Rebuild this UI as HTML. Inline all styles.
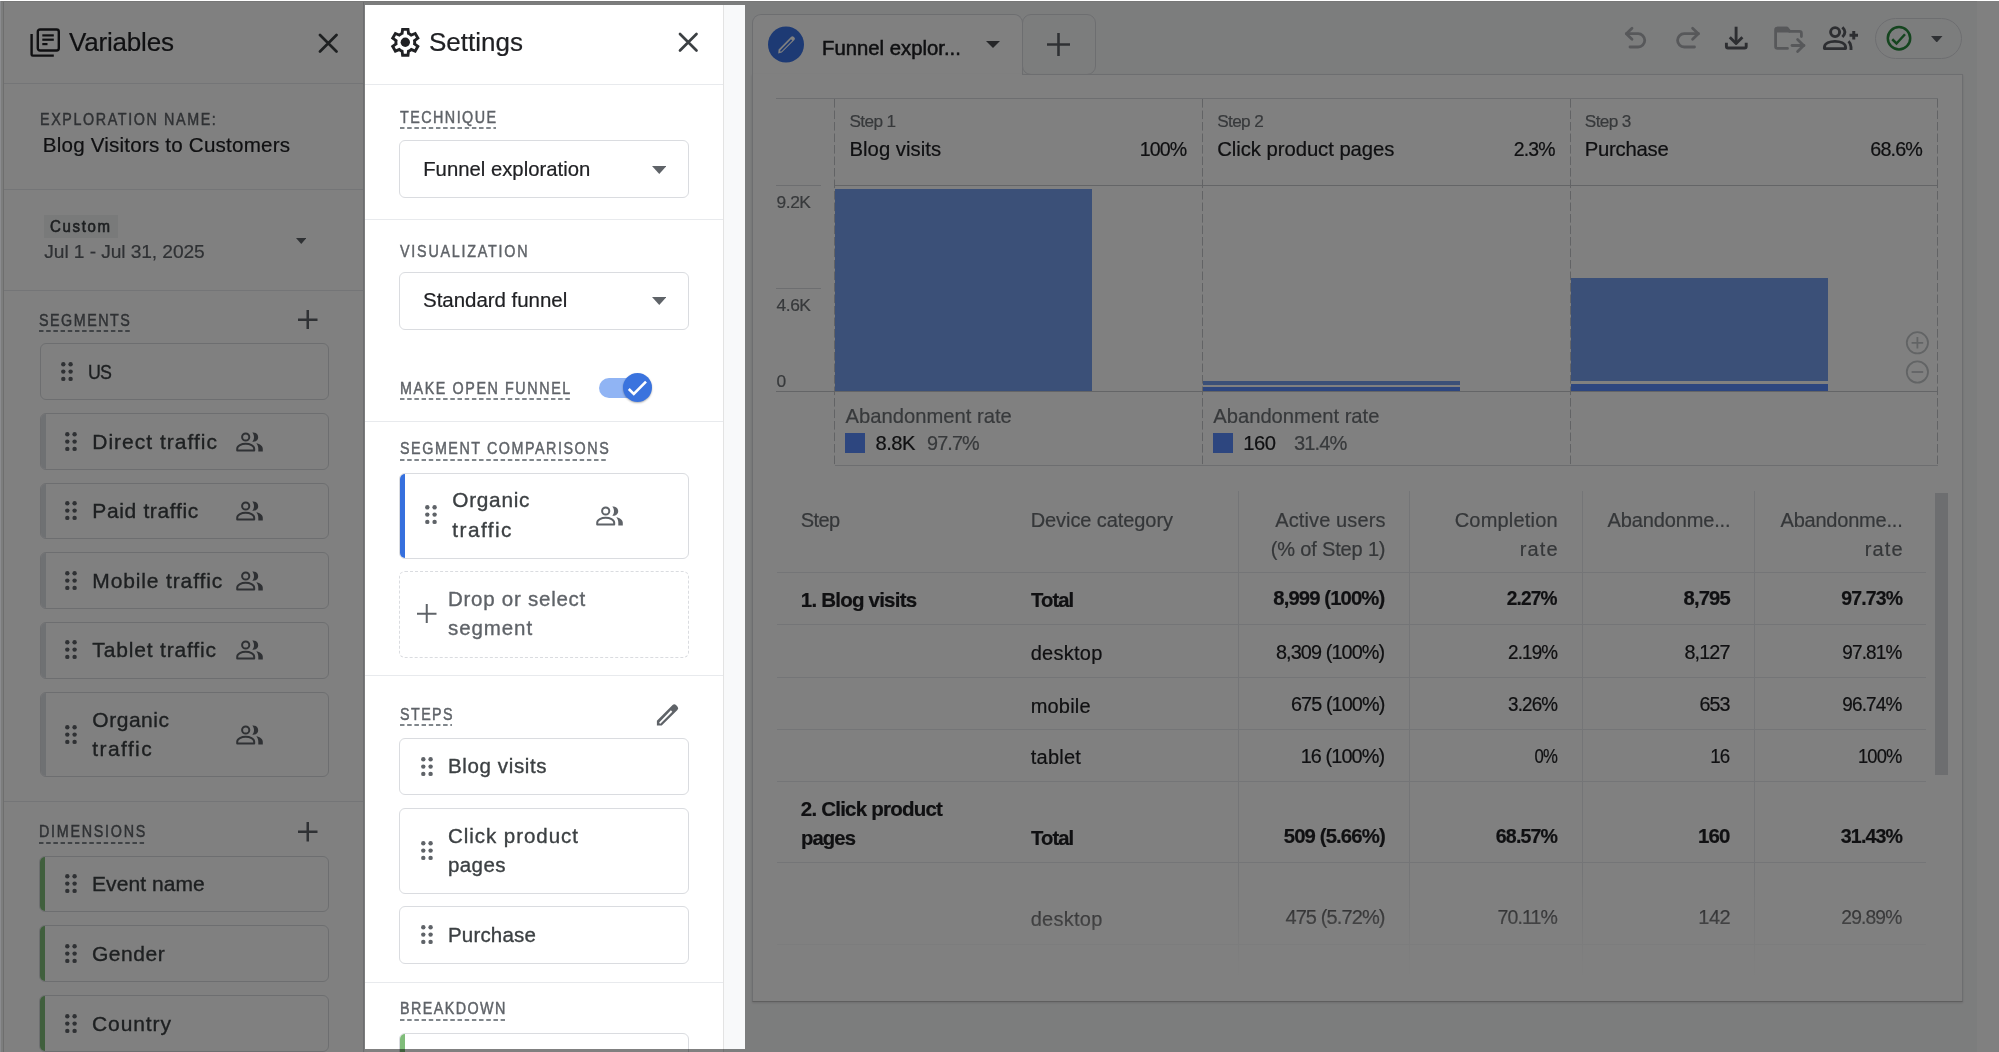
<!DOCTYPE html><html><head><meta charset="utf-8"><style>
html,body{margin:0;padding:0;}
body{width:1999px;height:1052px;overflow:hidden;position:relative;background:#f8f9fa;font-family:"Liberation Sans", sans-serif;}
.t{position:absolute;white-space:nowrap;line-height:1;-webkit-text-stroke:0.2px currentColor;}
.r{position:absolute;}
</style></head><body><div id="root" style="position:absolute;left:0;top:0;width:1999px;height:1052px;overflow:hidden;will-change:transform;background:#f8f9fa;">
<div class="r" style="left:3px;top:1px;width:361px;height:1051px;background:#fff;border-left:1px solid #dcdcdc;border-right:1px solid #dadce0;box-sizing:border-box;"></div>
<div class="r" style="left:0px;top:1px;width:1999px;height:1px;background:#eeeeee;"></div>
<svg class="r" style="left:29px;top:27px;width:32px;height:32px" viewBox="0 0 32 32"><g fill="none" stroke="#202124" stroke-width="2.4"><rect x="8.8" y="2.5" width="21" height="21" rx="2.2"/><path d="M2.6 7 V27.5 Q2.6 28.6 3.7 28.6 H24.8"/></g><g fill="#202124"><rect x="13.3" y="7.3" width="11.5" height="2.2"/><rect x="13.3" y="11.6" width="11.5" height="2.2"/><rect x="13.3" y="16" width="5.2" height="2.2"/></g></svg>
<div class="t" style="top:28.99px;font-size:26px;color:#202124;letter-spacing:-0.184px;left:69.00px;">Variables</div>
<svg class="r" style="left:318px;top:32.5px;width:20.5px;height:20.5px" viewBox="0 0 20.5 20.5"><path d="M2 2 L18.5 18.5 M18.5 2 L2 18.5" stroke="#3c4043" stroke-width="2.7" stroke-linecap="round"/></svg>
<div class="r" style="left:4px;top:83px;width:359px;height:1px;background:#e8eaed;"></div>
<div class="t" style="top:111.30px;font-size:16.3px;color:#5f6368;transform:scaleX(0.8800);transform-origin:left center;letter-spacing:1.822px;left:39.70px;-webkit-text-stroke:0.45px currentColor;">EXPLORATION NAME:</div>
<div class="t" style="top:134.56px;font-size:20.6px;color:#202124;letter-spacing:0.197px;left:42.80px;">Blog Visitors to Customers</div>
<div class="r" style="left:4px;top:189px;width:359px;height:1px;background:#e8eaed;"></div>
<div class="r" style="left:44px;top:215px;width:74px;height:23px;background:#f1f3f4;"></div>
<div class="t" style="top:218.63px;font-size:15.8px;color:#3c4043;transform:scaleX(0.9500);transform-origin:left center;letter-spacing:1.747px;left:50.30px;-webkit-text-stroke:0.6px currentColor;">Custom</div>
<div class="t" style="top:241.55px;font-size:19.2px;color:#5f6368;letter-spacing:-0.088px;left:44.30px;">Jul 1 - Jul 31, 2025</div>
<svg class="r" style="left:295.5px;top:237.5px;width:10.5px;height:6px" viewBox="0 0 10.5 6"><path d="M0 0 H10.5 L5.25 6 Z" fill="#5f6368"/></svg>
<div class="r" style="left:4px;top:290px;width:359px;height:1px;background:#e8eaed;"></div>
<div class="t" style="top:311.50px;font-size:16.3px;color:#5f6368;transform:scaleX(0.8800);transform-origin:left center;letter-spacing:1.708px;left:39.40px;-webkit-text-stroke:0.45px currentColor;">SEGMENTS</div>
<div class="r" style="left:39.4px;top:330px;width:91.0px;height:2px;background-image:linear-gradient(to right,#80868b 0 4.5px,transparent 4.5px 7.2px);background-size:7.2px 2px;"></div>
<svg class="r" style="left:298px;top:309.8px;width:19.5px;height:19.5px" viewBox="0 0 19.5 19.5"><path d="M9.75 0 V19.5 M0 9.75 H19.5" stroke="#5f6368" stroke-width="2.5"/></svg>
<div class="r" style="left:40px;top:343px;width:289px;height:57px;border:1px solid #dadce0;border-radius:6px;box-sizing:border-box;background:#fff;overflow:hidden;"></div>
<svg class="r" style="left:61px;top:361.8px;width:13px;height:20px" viewBox="0 0 13 20"><circle cx="2.30" cy="2.30" r="2.2" fill="#5f6368"/><circle cx="2.30" cy="9.60" r="2.2" fill="#5f6368"/><circle cx="2.30" cy="16.90" r="2.2" fill="#5f6368"/><circle cx="9.60" cy="2.30" r="2.2" fill="#5f6368"/><circle cx="9.60" cy="9.60" r="2.2" fill="#5f6368"/><circle cx="9.60" cy="16.90" r="2.2" fill="#5f6368"/></svg>
<div class="t" style="top:361.02px;font-size:21px;color:#3c4043;transform:scaleX(0.8489);transform-origin:left center;letter-spacing:-0.9px;left:87.80px;-webkit-text-stroke:0.35px currentColor;">US</div>
<div class="r" style="left:40px;top:413px;width:289px;height:57px;border:1px solid #dadce0;border-radius:6px;box-sizing:border-box;background:#fff;overflow:hidden;"><div style="position:absolute;left:-1px;top:-1px;bottom:-1px;width:5.5px;background:#dee1e6"></div></div>
<svg class="r" style="left:65px;top:431.65px;width:13px;height:20px" viewBox="0 0 13 20"><circle cx="2.30" cy="2.30" r="2.2" fill="#5f6368"/><circle cx="2.30" cy="9.60" r="2.2" fill="#5f6368"/><circle cx="2.30" cy="16.90" r="2.2" fill="#5f6368"/><circle cx="9.60" cy="2.30" r="2.2" fill="#5f6368"/><circle cx="9.60" cy="9.60" r="2.2" fill="#5f6368"/><circle cx="9.60" cy="16.90" r="2.2" fill="#5f6368"/></svg>
<div class="t" style="top:430.67px;font-size:21px;color:#3c4043;letter-spacing:0.997px;left:92.30px;-webkit-text-stroke:0.35px currentColor;">Direct traffic</div>
<svg class="r" style="left:236px;top:431.65px;width:28px;height:20px" viewBox="0 0 28 20"><circle cx="9.7" cy="5" r="3.6" fill="none" stroke="#5f6368" stroke-width="2"/><path d="M1.2 18.5 V16.8 C1.2 13.6 5.5 11.8 9.7 11.8 C13.9 11.8 18.2 13.6 18.2 16.8 V18.5 Z" fill="none" stroke="#5f6368" stroke-width="2" stroke-linejoin="round"/><path d="M16.3 0.6 C19.8 0.2 22.2 2.4 22.2 5.2 C22.2 8 19.8 10.2 16.3 9.8 C17.4 8.5 18 6.9 18 5.2 C18 3.5 17.4 1.9 16.3 0.6 Z" fill="#5f6368"/><path d="M20.3 11.3 C24 12 26.8 13.8 26.8 16.8 V19.5 H22.3 V16.8 C22.3 14.6 21.6 12.7 20.3 11.3 Z" fill="#5f6368"/></svg>
<div class="r" style="left:40px;top:483px;width:289px;height:56px;border:1px solid #dadce0;border-radius:6px;box-sizing:border-box;background:#fff;overflow:hidden;"><div style="position:absolute;left:-1px;top:-1px;bottom:-1px;width:5.5px;background:#dee1e6"></div></div>
<svg class="r" style="left:65px;top:501.1px;width:13px;height:20px" viewBox="0 0 13 20"><circle cx="2.30" cy="2.30" r="2.2" fill="#5f6368"/><circle cx="2.30" cy="9.60" r="2.2" fill="#5f6368"/><circle cx="2.30" cy="16.90" r="2.2" fill="#5f6368"/><circle cx="9.60" cy="2.30" r="2.2" fill="#5f6368"/><circle cx="9.60" cy="9.60" r="2.2" fill="#5f6368"/><circle cx="9.60" cy="16.90" r="2.2" fill="#5f6368"/></svg>
<div class="t" style="top:500.12px;font-size:21px;color:#3c4043;letter-spacing:0.643px;left:92.30px;-webkit-text-stroke:0.35px currentColor;">Paid traffic</div>
<svg class="r" style="left:236px;top:501.1px;width:28px;height:20px" viewBox="0 0 28 20"><circle cx="9.7" cy="5" r="3.6" fill="none" stroke="#5f6368" stroke-width="2"/><path d="M1.2 18.5 V16.8 C1.2 13.6 5.5 11.8 9.7 11.8 C13.9 11.8 18.2 13.6 18.2 16.8 V18.5 Z" fill="none" stroke="#5f6368" stroke-width="2" stroke-linejoin="round"/><path d="M16.3 0.6 C19.8 0.2 22.2 2.4 22.2 5.2 C22.2 8 19.8 10.2 16.3 9.8 C17.4 8.5 18 6.9 18 5.2 C18 3.5 17.4 1.9 16.3 0.6 Z" fill="#5f6368"/><path d="M20.3 11.3 C24 12 26.8 13.8 26.8 16.8 V19.5 H22.3 V16.8 C22.3 14.6 21.6 12.7 20.3 11.3 Z" fill="#5f6368"/></svg>
<div class="r" style="left:40px;top:552px;width:289px;height:57px;border:1px solid #dadce0;border-radius:6px;box-sizing:border-box;background:#fff;overflow:hidden;"><div style="position:absolute;left:-1px;top:-1px;bottom:-1px;width:5.5px;background:#dee1e6"></div></div>
<svg class="r" style="left:65px;top:570.6px;width:13px;height:20px" viewBox="0 0 13 20"><circle cx="2.30" cy="2.30" r="2.2" fill="#5f6368"/><circle cx="2.30" cy="9.60" r="2.2" fill="#5f6368"/><circle cx="2.30" cy="16.90" r="2.2" fill="#5f6368"/><circle cx="9.60" cy="2.30" r="2.2" fill="#5f6368"/><circle cx="9.60" cy="9.60" r="2.2" fill="#5f6368"/><circle cx="9.60" cy="16.90" r="2.2" fill="#5f6368"/></svg>
<div class="t" style="top:569.62px;font-size:21px;color:#3c4043;letter-spacing:0.865px;left:92.30px;-webkit-text-stroke:0.35px currentColor;">Mobile traffic</div>
<svg class="r" style="left:236px;top:570.6px;width:28px;height:20px" viewBox="0 0 28 20"><circle cx="9.7" cy="5" r="3.6" fill="none" stroke="#5f6368" stroke-width="2"/><path d="M1.2 18.5 V16.8 C1.2 13.6 5.5 11.8 9.7 11.8 C13.9 11.8 18.2 13.6 18.2 16.8 V18.5 Z" fill="none" stroke="#5f6368" stroke-width="2" stroke-linejoin="round"/><path d="M16.3 0.6 C19.8 0.2 22.2 2.4 22.2 5.2 C22.2 8 19.8 10.2 16.3 9.8 C17.4 8.5 18 6.9 18 5.2 C18 3.5 17.4 1.9 16.3 0.6 Z" fill="#5f6368"/><path d="M20.3 11.3 C24 12 26.8 13.8 26.8 16.8 V19.5 H22.3 V16.8 C22.3 14.6 21.6 12.7 20.3 11.3 Z" fill="#5f6368"/></svg>
<div class="r" style="left:40px;top:622px;width:289px;height:57px;border:1px solid #dadce0;border-radius:6px;box-sizing:border-box;background:#fff;overflow:hidden;"><div style="position:absolute;left:-1px;top:-1px;bottom:-1px;width:5.5px;background:#dee1e6"></div></div>
<svg class="r" style="left:65px;top:640.45px;width:13px;height:20px" viewBox="0 0 13 20"><circle cx="2.30" cy="2.30" r="2.2" fill="#5f6368"/><circle cx="2.30" cy="9.60" r="2.2" fill="#5f6368"/><circle cx="2.30" cy="16.90" r="2.2" fill="#5f6368"/><circle cx="9.60" cy="2.30" r="2.2" fill="#5f6368"/><circle cx="9.60" cy="9.60" r="2.2" fill="#5f6368"/><circle cx="9.60" cy="16.90" r="2.2" fill="#5f6368"/></svg>
<div class="t" style="top:639.47px;font-size:21px;color:#3c4043;letter-spacing:0.836px;left:92.30px;-webkit-text-stroke:0.35px currentColor;">Tablet traffic</div>
<svg class="r" style="left:236px;top:640.45px;width:28px;height:20px" viewBox="0 0 28 20"><circle cx="9.7" cy="5" r="3.6" fill="none" stroke="#5f6368" stroke-width="2"/><path d="M1.2 18.5 V16.8 C1.2 13.6 5.5 11.8 9.7 11.8 C13.9 11.8 18.2 13.6 18.2 16.8 V18.5 Z" fill="none" stroke="#5f6368" stroke-width="2" stroke-linejoin="round"/><path d="M16.3 0.6 C19.8 0.2 22.2 2.4 22.2 5.2 C22.2 8 19.8 10.2 16.3 9.8 C17.4 8.5 18 6.9 18 5.2 C18 3.5 17.4 1.9 16.3 0.6 Z" fill="#5f6368"/><path d="M20.3 11.3 C24 12 26.8 13.8 26.8 16.8 V19.5 H22.3 V16.8 C22.3 14.6 21.6 12.7 20.3 11.3 Z" fill="#5f6368"/></svg>
<div class="r" style="left:40px;top:692px;width:289px;height:85px;border:1px solid #dadce0;border-radius:6px;box-sizing:border-box;background:#fff;overflow:hidden;"><div style="position:absolute;left:-1px;top:-1px;bottom:-1px;width:5.5px;background:#dee1e6"></div></div>
<svg class="r" style="left:65px;top:724.55px;width:13px;height:20px" viewBox="0 0 13 20"><circle cx="2.30" cy="2.30" r="2.2" fill="#5f6368"/><circle cx="2.30" cy="9.60" r="2.2" fill="#5f6368"/><circle cx="2.30" cy="16.90" r="2.2" fill="#5f6368"/><circle cx="9.60" cy="2.30" r="2.2" fill="#5f6368"/><circle cx="9.60" cy="9.60" r="2.2" fill="#5f6368"/><circle cx="9.60" cy="16.90" r="2.2" fill="#5f6368"/></svg>
<div class="t" style="top:708.97px;font-size:21px;color:#3c4043;letter-spacing:0.528px;left:92.30px;-webkit-text-stroke:0.35px currentColor;">Organic</div>
<div class="t" style="top:737.67px;font-size:21px;color:#3c4043;letter-spacing:1.405px;left:92.30px;-webkit-text-stroke:0.35px currentColor;">traffic</div>
<svg class="r" style="left:236px;top:724.55px;width:28px;height:20px" viewBox="0 0 28 20"><circle cx="9.7" cy="5" r="3.6" fill="none" stroke="#5f6368" stroke-width="2"/><path d="M1.2 18.5 V16.8 C1.2 13.6 5.5 11.8 9.7 11.8 C13.9 11.8 18.2 13.6 18.2 16.8 V18.5 Z" fill="none" stroke="#5f6368" stroke-width="2" stroke-linejoin="round"/><path d="M16.3 0.6 C19.8 0.2 22.2 2.4 22.2 5.2 C22.2 8 19.8 10.2 16.3 9.8 C17.4 8.5 18 6.9 18 5.2 C18 3.5 17.4 1.9 16.3 0.6 Z" fill="#5f6368"/><path d="M20.3 11.3 C24 12 26.8 13.8 26.8 16.8 V19.5 H22.3 V16.8 C22.3 14.6 21.6 12.7 20.3 11.3 Z" fill="#5f6368"/></svg>
<div class="r" style="left:4px;top:801px;width:359px;height:1px;background:#e8eaed;"></div>
<div class="t" style="top:823.10px;font-size:16.3px;color:#5f6368;transform:scaleX(0.8800);transform-origin:left center;letter-spacing:1.966px;left:39.30px;-webkit-text-stroke:0.45px currentColor;">DIMENSIONS</div>
<div class="r" style="left:39.3px;top:842px;width:106.39999999999999px;height:2px;background-image:linear-gradient(to right,#80868b 0 4.5px,transparent 4.5px 7.2px);background-size:7.2px 2px;"></div>
<svg class="r" style="left:298px;top:822.3px;width:19.5px;height:19.5px" viewBox="0 0 19.5 19.5"><path d="M9.75 0 V19.5 M0 9.75 H19.5" stroke="#5f6368" stroke-width="2.5"/></svg>
<div class="r" style="left:39px;top:856px;width:290px;height:56px;border:1px solid #dadce0;border-radius:6px;box-sizing:border-box;background:#fff;overflow:hidden;"><div style="position:absolute;left:-1px;top:-1px;bottom:-1px;width:6px;background:#80bd7a"></div></div>
<svg class="r" style="left:65px;top:874.0px;width:13px;height:20px" viewBox="0 0 13 20"><circle cx="2.30" cy="2.30" r="2.2" fill="#5f6368"/><circle cx="2.30" cy="9.60" r="2.2" fill="#5f6368"/><circle cx="2.30" cy="16.90" r="2.2" fill="#5f6368"/><circle cx="9.60" cy="2.30" r="2.2" fill="#5f6368"/><circle cx="9.60" cy="9.60" r="2.2" fill="#5f6368"/><circle cx="9.60" cy="16.90" r="2.2" fill="#5f6368"/></svg>
<div class="t" style="top:873.02px;font-size:21px;color:#3c4043;letter-spacing:0.071px;left:92.00px;-webkit-text-stroke:0.35px currentColor;">Event name</div>
<div class="r" style="left:39px;top:925px;width:290px;height:57px;border:1px solid #dadce0;border-radius:6px;box-sizing:border-box;background:#fff;overflow:hidden;"><div style="position:absolute;left:-1px;top:-1px;bottom:-1px;width:6px;background:#80bd7a"></div></div>
<svg class="r" style="left:65px;top:943.7px;width:13px;height:20px" viewBox="0 0 13 20"><circle cx="2.30" cy="2.30" r="2.2" fill="#5f6368"/><circle cx="2.30" cy="9.60" r="2.2" fill="#5f6368"/><circle cx="2.30" cy="16.90" r="2.2" fill="#5f6368"/><circle cx="9.60" cy="2.30" r="2.2" fill="#5f6368"/><circle cx="9.60" cy="9.60" r="2.2" fill="#5f6368"/><circle cx="9.60" cy="16.90" r="2.2" fill="#5f6368"/></svg>
<div class="t" style="top:942.72px;font-size:21px;color:#3c4043;letter-spacing:0.531px;left:92.00px;-webkit-text-stroke:0.35px currentColor;">Gender</div>
<div class="r" style="left:39px;top:995px;width:290px;height:57px;border:1px solid #dadce0;border-radius:6px;box-sizing:border-box;background:#fff;overflow:hidden;"><div style="position:absolute;left:-1px;top:-1px;bottom:-1px;width:6px;background:#80bd7a"></div></div>
<svg class="r" style="left:65px;top:1013.5px;width:13px;height:20px" viewBox="0 0 13 20"><circle cx="2.30" cy="2.30" r="2.2" fill="#5f6368"/><circle cx="2.30" cy="9.60" r="2.2" fill="#5f6368"/><circle cx="2.30" cy="16.90" r="2.2" fill="#5f6368"/><circle cx="9.60" cy="2.30" r="2.2" fill="#5f6368"/><circle cx="9.60" cy="9.60" r="2.2" fill="#5f6368"/><circle cx="9.60" cy="16.90" r="2.2" fill="#5f6368"/></svg>
<div class="t" style="top:1012.52px;font-size:21px;color:#3c4043;letter-spacing:0.911px;left:92.00px;-webkit-text-stroke:0.35px currentColor;">Country</div>
<div class="r" style="left:752px;top:14px;width:271px;height:70px;background:#fff;border:1px solid #dadce0;border-bottom:none;border-radius:9px 9px 0 0;box-sizing:border-box;"></div>
<div class="r" style="left:1022px;top:14px;width:74px;height:61px;background:#f8f9fa;border:1px solid #dadce0;border-radius:9px;box-sizing:border-box;"></div>
<div class="r" style="left:752px;top:74px;width:1211px;height:928px;background:#fff;border:1px solid #dadce0;border-top:none;border-bottom:1.5px solid #bdbdbd;box-sizing:border-box;box-shadow:0 1px 2px rgba(0,0,0,0.12);"></div>
<div class="r" style="left:1977px;top:1px;width:22px;height:1051px;background:#fff;"></div>
<div class="r" style="left:1022px;top:74px;width:940px;height:1px;background:#dadce0;"></div>
<svg class="r" style="left:768px;top:26px;width:36px;height:37px" viewBox="0 0 36 37"><circle cx="18" cy="18.5" r="18" fill="#3a74e8"/><path d="M10.2 27.6 L10.6 23.4 L23.2 10.8 Q24.4 9.6 25.6 10.8 L26.4 11.6 Q27.6 12.8 26.4 14 L13.8 26.6 Z M12.3 24.2 L12.1 25.6 L13.4 25.5 L24.3 14.6 L23 13.3 Z" fill="#fff" fill-rule="evenodd"/></svg>
<div class="t" style="top:37.62px;font-size:20.3px;color:#202124;letter-spacing:0.015px;left:822.00px;-webkit-text-stroke:0.5px currentColor;">Funnel explor...</div>
<svg class="r" style="left:986px;top:41px;width:14px;height:7px" viewBox="0 0 14 7"><path d="M0 0 H14 L7.0 7 Z" fill="#4a4d50"/></svg>
<svg class="r" style="left:1047px;top:33px;width:23px;height:23px" viewBox="0 0 23 23"><path d="M11.5 0 V23 M0 11.5 H23" stroke="#5f6368" stroke-width="2.6"/></svg>
<svg class="r" style="left:1600px;top:20px;width:270px;height:40px" viewBox="0 0 270 40"><g fill="none" stroke="#adb0b4" stroke-width="2.8" stroke-linecap="round" stroke-linejoin="round"><path d="M26.5 13.7 H38.1 A6.65 6.65 0 0 1 38.1 27 H30"/><path d="M32 8.2 L26.3 13.7 L32 19.3"/><path d="M98.5 13.7 H84.2 A6.65 6.65 0 0 0 84.2 27 H94.5"/><path d="M92.6 8.2 L98.3 13.7 L92.6 19.3"/><path d="M87.5 -0.6" /><path d="M187.5 28.4 H177.5 Q175.6 28.4 175.6 26.5 V10 Q175.6 8.1 177.5 8.1 H187 L189.6 11.4 H199.5 Q201.4 11.4 201.4 13.3 V16.5"/><path d="M192 25.5 H204"/><path d="M197.6 19.6 L203.6 25.5 L197.6 31.4"/></g><path d="M175 9 Q175 6.8 177.2 6.8 H187.6 L190.6 10.2 L190 12.4 H176.2 Z" fill="#adb0b4"/><g fill="none" stroke="#5a5d62" stroke-width="2.9" stroke-linecap="butt" stroke-linejoin="round"><path d="M136.1 6.7 V23.5"/><path d="M129.8 17.2 L136.1 23.5 L142.4 17.2"/><path d="M126.4 22.8 V26.4 Q126.4 28 128 28 H144.6 Q146.2 28 146.2 26.4 V22.8"/><circle cx="235.1" cy="12.1" r="4.5"/><path d="M224.4 28.6 V27.5 C224.4 23 230 21.4 235 21.4 C240 21.4 245.6 23 245.6 27.5 V28.6 Z"/><path d="M242.4 7.2 Q247.4 12.1 242.4 17"/><path d="M248.5 21.2 Q251 23.5 251 27 V30"/><path d="M253.75 11 V19.5 M249.5 15.25 H258" stroke-width="3"/></g></svg>
<div class="r" style="left:1874.5px;top:18px;width:87px;height:41px;border:1px solid #dadce0;border-radius:21px;box-sizing:border-box;"></div>
<svg class="r" style="left:1886px;top:25px;width:27px;height:27px" viewBox="0 0 27 27"><circle cx="13" cy="13.3" r="11.2" fill="none" stroke="#2a8a3e" stroke-width="2.5"/><path d="M6.25 14.25 L10.5 18.5 L19 9.25" fill="none" stroke="#2a8a3e" stroke-width="2.5"/></svg>
<svg class="r" style="left:1931px;top:35.5px;width:11.5px;height:6.5px" viewBox="0 0 11.5 6.5"><path d="M0 0 H11.5 L5.75 6.5 Z" fill="#5f6368"/></svg>
<div class="r" style="left:776px;top:98px;width:1162px;height:1px;background:#dadce0;"></div>
<div class="r" style="left:776px;top:185px;width:45px;height:1px;background:#dadce0;"></div>
<div class="r" style="left:835px;top:185px;width:1103px;height:1px;background:#c8cacd;"></div>
<div class="r" style="left:776px;top:288px;width:45px;height:1px;background:#dadce0;"></div>
<div class="r" style="left:776px;top:391px;width:1162px;height:1px;background:#c8cacd;"></div>
<div class="r" style="left:835px;top:465px;width:1103px;height:1px;background:#dadce0;"></div>
<div class="r" style="left:834px;top:98.5px;width:1px;height:367px;background-image:linear-gradient(to bottom,#c4c6c9 0 8.6px,transparent 8.6px 11.5px);background-size:1px 11.5px;"></div>
<div class="r" style="left:1202px;top:98.5px;width:1px;height:367px;background-image:linear-gradient(to bottom,#c4c6c9 0 8.6px,transparent 8.6px 11.5px);background-size:1px 11.5px;"></div>
<div class="r" style="left:1570px;top:98.5px;width:1px;height:367px;background-image:linear-gradient(to bottom,#c4c6c9 0 8.6px,transparent 8.6px 11.5px);background-size:1px 11.5px;"></div>
<div class="r" style="left:1937px;top:98.5px;width:1px;height:367px;background-image:linear-gradient(to bottom,#c4c6c9 0 8.6px,transparent 8.6px 11.5px);background-size:1px 11.5px;"></div>
<div class="r" style="left:835px;top:189px;width:257px;height:202px;background:#76a0f0;"></div>
<div class="r" style="left:1203px;top:381px;width:257px;height:4px;background:#76a0f0;"></div>
<div class="r" style="left:1203px;top:387px;width:257px;height:4px;background:#5a8cfe;"></div>
<div class="r" style="left:1571px;top:278px;width:257px;height:103px;background:#76a0f0;"></div>
<div class="r" style="left:1571px;top:384px;width:257px;height:7px;background:#5a8cfe;"></div>
<div class="t" style="top:112.74px;font-size:17.2px;color:#6e7276;letter-spacing:-0.627px;left:849.50px;">Step 1</div>
<div class="t" style="top:139.32px;font-size:20.3px;color:#202124;letter-spacing:0.024px;left:849.50px;">Blog visits</div>
<div class="t" style="top:139.32px;font-size:20.3px;color:#202124;transform:scaleX(0.9653);transform-origin:right center;letter-spacing:-0.9px;right:812.67px;">100%</div>
<div class="t" style="top:112.74px;font-size:17.2px;color:#6e7276;letter-spacing:-0.627px;left:1217.20px;">Step 2</div>
<div class="t" style="top:139.32px;font-size:20.3px;color:#202124;letter-spacing:-0.047px;left:1217.20px;">Click product pages</div>
<div class="t" style="top:139.32px;font-size:20.3px;color:#202124;transform:scaleX(0.9572);transform-origin:right center;letter-spacing:-0.9px;right:444.66px;">2.3%</div>
<div class="t" style="top:112.74px;font-size:17.2px;color:#6e7276;letter-spacing:-0.627px;left:1584.80px;">Step 3</div>
<div class="t" style="top:139.32px;font-size:20.3px;color:#202124;letter-spacing:-0.25px;left:1584.80px;">Purchase</div>
<div class="t" style="top:139.32px;font-size:20.3px;color:#202124;transform:scaleX(0.9750);transform-origin:right center;letter-spacing:-0.9px;right:77.48px;">68.6%</div>
<div class="t" style="top:193.57px;font-size:17.4px;color:#6e7276;letter-spacing:-0.438px;left:776.50px;">9.2K</div>
<div class="t" style="top:296.87px;font-size:17.4px;color:#6e7276;letter-spacing:-0.438px;left:776.50px;">4.6K</div>
<div class="t" style="top:372.87px;font-size:17.4px;color:#6e7276;left:776.50px;">0</div>
<div class="t" style="top:405.60px;font-size:20.2px;color:#6e7276;letter-spacing:0.011px;left:845.50px;">Abandonment rate</div>
<div class="r" style="left:845px;top:433px;width:20px;height:20px;background:#5a8cfe;"></div>
<div class="t" style="top:432.90px;font-size:20.2px;color:#202124;letter-spacing:-0.487px;left:875.50px;">8.8K</div>
<div class="t" style="top:432.90px;font-size:20.2px;color:#6e7276;transform:scaleX(0.9817);transform-origin:left center;letter-spacing:-0.9px;left:927.30px;">97.7%</div>
<div class="t" style="top:405.60px;font-size:20.2px;color:#6e7276;letter-spacing:0.011px;left:1213.20px;">Abandonment rate</div>
<div class="r" style="left:1213px;top:433px;width:20px;height:20px;background:#5a8cfe;"></div>
<div class="t" style="top:432.90px;font-size:20.2px;color:#202124;letter-spacing:-0.502px;left:1243.20px;">160</div>
<div class="t" style="top:432.90px;font-size:20.2px;color:#6e7276;transform:scaleX(0.9948);transform-origin:left center;letter-spacing:-0.9px;left:1294.40px;">31.4%</div>
<svg class="r" style="left:1905px;top:330px;width:25px;height:55px" viewBox="0 0 25 55"><g fill="none" stroke="#c4c7ca" stroke-width="1.8"><circle cx="12.4" cy="12.8" r="10.6"/><path d="M12.4 7 V18.6 M6.6 12.8 H18.2"/><circle cx="12.4" cy="42" r="10.6"/><path d="M6.6 42 H18.2"/></g></svg>
<div class="r" style="left:1238px;top:491px;width:1px;height:509px;background:#e8eaed;"></div>
<div class="r" style="left:1409px;top:491px;width:1px;height:509px;background:#e8eaed;"></div>
<div class="r" style="left:1582px;top:491px;width:1px;height:509px;background:#e8eaed;"></div>
<div class="r" style="left:1754px;top:491px;width:1px;height:509px;background:#e8eaed;"></div>
<div class="r" style="left:777px;top:572px;width:1149px;height:1px;background:#e8eaed;"></div>
<div class="r" style="left:777px;top:624px;width:1149px;height:1px;background:#e8eaed;"></div>
<div class="r" style="left:777px;top:677px;width:1149px;height:1px;background:#e8eaed;"></div>
<div class="r" style="left:777px;top:729px;width:1149px;height:1px;background:#e8eaed;"></div>
<div class="r" style="left:777px;top:781px;width:1149px;height:1px;background:#e8eaed;"></div>
<div class="r" style="left:777px;top:862px;width:1149px;height:1px;background:#e8eaed;"></div>
<div class="r" style="left:777px;top:944px;width:1149px;height:1px;background:#e8eaed;"></div>
<div class="t" style="top:510.07px;font-size:20px;color:#6a6e72;letter-spacing:-0.58px;left:800.80px;">Step</div>
<div class="t" style="top:510.07px;font-size:20px;color:#6a6e72;letter-spacing:-0.079px;left:1030.70px;">Device category</div>
<div class="t" style="top:510.47px;font-size:20px;color:#6a6e72;letter-spacing:0.125px;right:613.38px;">Active users</div>
<div class="t" style="top:538.97px;font-size:20px;color:#6a6e72;letter-spacing:-0.16px;right:613.66px;">(% of Step 1)</div>
<div class="t" style="top:510.47px;font-size:20px;color:#6a6e72;letter-spacing:0.205px;right:441.10px;">Completion</div>
<div class="t" style="top:538.97px;font-size:20px;color:#6a6e72;letter-spacing:1.177px;right:440.12px;">rate</div>
<div class="t" style="top:510.47px;font-size:20px;color:#6a6e72;letter-spacing:-0.139px;right:268.54px;">Abandonme...</div>
<div class="t" style="top:510.47px;font-size:20px;color:#6a6e72;letter-spacing:-0.212px;right:96.51px;">Abandonme...</div>
<div class="t" style="top:538.97px;font-size:20px;color:#6a6e72;letter-spacing:1.177px;right:95.12px;">rate</div>
<div class="t" style="top:590.25px;font-size:20.5px;color:#202124;font-weight:700;letter-spacing:-0.781px;left:800.80px;">1. Blog visits</div>
<div class="t" style="top:590.25px;font-size:20.5px;color:#202124;transform:scaleX(0.9851);transform-origin:left center;font-weight:700;letter-spacing:-0.9px;left:1030.70px;">Total</div>
<div class="t" style="top:588.25px;font-size:20.5px;color:#202124;transform:scaleX(0.9878);transform-origin:right center;font-weight:700;letter-spacing:-0.9px;right:614.39px;">8,999 (100%)</div>
<div class="t" style="top:588.25px;font-size:20.5px;color:#202124;transform:scaleX(0.9317);transform-origin:right center;font-weight:700;letter-spacing:-0.9px;right:442.14px;">2.27%</div>
<div class="t" style="top:588.25px;font-size:20.5px;color:#202124;transform:scaleX(0.9875);transform-origin:right center;font-weight:700;letter-spacing:-0.9px;right:269.29px;">8,795</div>
<div class="t" style="top:588.25px;font-size:20.5px;color:#202124;transform:scaleX(0.9503);transform-origin:right center;font-weight:700;letter-spacing:-0.9px;right:97.16px;">97.73%</div>
<div class="t" style="top:643.07px;font-size:20px;color:#202124;letter-spacing:0.276px;left:1030.70px;">desktop</div>
<div class="t" style="top:641.77px;font-size:20px;color:#202124;transform:scaleX(0.9911);transform-origin:right center;letter-spacing:-0.9px;right:614.39px;">8,309 (100%)</div>
<div class="t" style="top:641.77px;font-size:20px;color:#202124;transform:scaleX(0.9416);transform-origin:right center;letter-spacing:-0.9px;right:442.15px;">2.19%</div>
<div class="t" style="top:641.77px;font-size:20px;color:#202124;transform:scaleX(0.9904);transform-origin:right center;letter-spacing:-0.9px;right:269.29px;">8,127</div>
<div class="t" style="top:641.77px;font-size:20px;color:#202124;transform:scaleX(0.9474);transform-origin:right center;letter-spacing:-0.9px;right:97.15px;">97.81%</div>
<div class="t" style="top:695.77px;font-size:20px;color:#202124;letter-spacing:0.196px;left:1030.70px;">mobile</div>
<div class="t" style="top:694.47px;font-size:20px;color:#202124;transform:scaleX(0.9905);transform-origin:right center;letter-spacing:-0.9px;right:614.39px;">675 (100%)</div>
<div class="t" style="top:694.47px;font-size:20px;color:#202124;transform:scaleX(0.9416);transform-origin:right center;letter-spacing:-0.9px;right:442.15px;">3.26%</div>
<div class="t" style="top:694.47px;font-size:20px;color:#202124;transform:scaleX(0.9850);transform-origin:right center;letter-spacing:-0.9px;right:269.29px;">653</div>
<div class="t" style="top:694.47px;font-size:20px;color:#202124;transform:scaleX(0.9474);transform-origin:right center;letter-spacing:-0.9px;right:97.15px;">96.74%</div>
<div class="t" style="top:747.47px;font-size:20px;color:#202124;letter-spacing:0.256px;left:1030.70px;">tablet</div>
<div class="t" style="top:746.17px;font-size:20px;color:#202124;transform:scaleX(0.9920);transform-origin:right center;letter-spacing:-0.9px;right:614.39px;">16 (100%)</div>
<div class="t" style="top:746.17px;font-size:20px;color:#202124;transform:scaleX(0.8355);transform-origin:right center;letter-spacing:-0.9px;right:442.05px;">0%</div>
<div class="t" style="top:746.17px;font-size:20px;color:#202124;transform:scaleX(0.9368);transform-origin:right center;letter-spacing:-0.9px;right:269.24px;">16</div>
<div class="t" style="top:746.17px;font-size:20px;color:#202124;transform:scaleX(0.9163);transform-origin:right center;letter-spacing:-0.9px;right:97.12px;">100%</div>
<div class="t" style="top:799.25px;font-size:20.5px;color:#202124;font-weight:700;letter-spacing:-0.779px;left:800.80px;">2. Click product</div>
<div class="t" style="top:827.65px;font-size:20.5px;color:#202124;transform:scaleX(0.9883);transform-origin:left center;font-weight:700;letter-spacing:-0.9px;left:800.80px;">pages</div>
<div class="t" style="top:828.05px;font-size:20.5px;color:#202124;transform:scaleX(0.9851);transform-origin:left center;font-weight:700;letter-spacing:-0.9px;left:1030.70px;">Total</div>
<div class="t" style="top:826.15px;font-size:20.5px;color:#202124;transform:scaleX(0.9925);transform-origin:right center;font-weight:700;letter-spacing:-0.9px;right:614.39px;">509 (5.66%)</div>
<div class="t" style="top:826.15px;font-size:20.5px;color:#202124;transform:scaleX(0.9565);transform-origin:right center;font-weight:700;letter-spacing:-0.9px;right:442.16px;">68.57%</div>
<div class="t" style="top:826.15px;font-size:20.5px;color:#202124;transform:scaleX(0.9968);transform-origin:right center;font-weight:700;letter-spacing:-0.9px;right:269.30px;">160</div>
<div class="t" style="top:826.15px;font-size:20.5px;color:#202124;transform:scaleX(0.9565);transform-origin:right center;font-weight:700;letter-spacing:-0.9px;right:97.16px;">31.43%</div>
<div class="t" style="top:909.27px;font-size:20px;color:#202124;letter-spacing:0.276px;left:1030.70px;">desktop</div>
<div class="t" style="top:907.47px;font-size:20px;color:#202124;letter-spacing:-0.885px;right:614.38px;">475 (5.72%)</div>
<div class="t" style="top:907.47px;font-size:20px;color:#202124;transform:scaleX(0.9767);transform-origin:right center;letter-spacing:-0.9px;right:442.18px;">70.11%</div>
<div class="t" style="top:907.47px;font-size:20px;color:#202124;letter-spacing:-0.538px;right:268.94px;">142</div>
<div class="t" style="top:907.47px;font-size:20px;color:#202124;transform:scaleX(0.9632);transform-origin:right center;letter-spacing:-0.9px;right:97.17px;">29.89%</div>
<div class="r" style="left:753px;top:872px;width:1208px;height:128px;background:linear-gradient(to bottom,rgba(255,255,255,0) 0px,rgba(255,255,255,0.45) 52px,rgba(255,255,255,0.9) 90px,#fff 105px);"></div>
<div class="r" style="left:1935px;top:493px;width:13px;height:282px;background:#dadce0;"></div>
<div class="r" style="left:0px;top:1px;width:1999px;height:4px;background:rgba(0,0,0,0.498);"></div>
<div class="r" style="left:0px;top:5px;width:365px;height:1047px;background:rgba(0,0,0,0.498);"></div>
<div class="r" style="left:745px;top:5px;width:1254px;height:1047px;background:rgba(0,0,0,0.498);"></div>
<div class="r" style="left:0px;top:0px;width:1999px;height:1px;background:#fff;"></div>
<div class="r" style="left:0px;top:1px;width:1px;height:1051px;background:#8b8c8f;"></div>
<div class="r" style="left:365px;top:5px;width:358px;height:1047px;background:#fff;"></div>
<div class="r" style="left:723px;top:5px;width:1px;height:1047px;background:#e3e3e3;"></div>
<div class="r" style="left:724px;top:5px;width:21px;height:1047px;background:#f8f9fa;"></div>
<svg class="r" style="left:387.9px;top:24.8px;width:34.6px;height:34.6px" viewBox="0 -960 960 960"><path fill="#202124" d="m370-80-16-128q-13-5-24.5-12T307-235l-119 50L78-375l103-78q-1-7-1-13.5v-27q0-6.5 1-13.5L78-585l110-190 119 50q11-8 23-15t24-12l16-128h220l16 128q13 5 24.5 12t22.5 15l119-50 110 190-103 78q1 7 1 13.5v27q0 6.5-2 13.5l103 78-110 190-118-50q-11 8-23 15t-24 12L590-80H370Zm70-80h79l14-106q31-8 57.5-23.5T639-327l99 41 39-68-86-65q5-14 7-29.5t2-31.5q0-16-2-31.5t-7-29.5l86-65-39-68-99 42q-22-23-48.5-38.5T533-694l-13-106h-79l-14 106q-31 8-57.5 23.5T321-633l-99-41-39 68 86 64q-5 15-7 30t-2 32q0 16 2 31t7 30l-86 65 39 68 99-42q22 23 48.5 38.5T427-266l13 106Z"/><circle cx="480" cy="-480" r="130" fill="#202124"/></svg>
<div class="t" style="top:29.09px;font-size:26px;color:#202124;letter-spacing:0.007px;left:429.00px;">Settings</div>
<svg class="r" style="left:678px;top:32.2px;width:20.5px;height:20.5px" viewBox="0 0 20.5 20.5"><path d="M2 2 L18.5 18.5 M18.5 2 L2 18.5" stroke="#3c4043" stroke-width="2.7" stroke-linecap="round"/></svg>
<div class="r" style="left:365px;top:84px;width:358px;height:1px;background:#e8eaed;"></div>
<div class="t" style="top:108.80px;font-size:16.3px;color:#5f6368;transform:scaleX(0.8800);transform-origin:left center;letter-spacing:1.654px;left:399.80px;-webkit-text-stroke:0.45px currentColor;">TECHNIQUE</div>
<div class="r" style="left:399.8px;top:127.30000000000001px;width:96.09999999999997px;height:2px;background-image:linear-gradient(to right,#80868b 0 4.5px,transparent 4.5px 7.2px);background-size:7.2px 2px;"></div>
<div class="r" style="left:399px;top:140px;width:290px;height:58px;border:1px solid #dadce0;border-radius:6px;box-sizing:border-box;background:#fff;overflow:hidden;"></div>
<div class="t" style="top:158.52px;font-size:20.3px;color:#202124;letter-spacing:0.012px;left:423.20px;">Funnel exploration</div>
<svg class="r" style="left:651.5px;top:165.5px;width:14.5px;height:8px" viewBox="0 0 14.5 8"><path d="M0 0 H14.5 L7.25 8 Z" fill="#5f6368"/></svg>
<div class="r" style="left:365px;top:219px;width:358px;height:1px;background:#e8eaed;"></div>
<div class="t" style="top:243.00px;font-size:16.3px;color:#5f6368;transform:scaleX(0.8800);transform-origin:left center;letter-spacing:2.006px;left:399.60px;-webkit-text-stroke:0.45px currentColor;">VISUALIZATION</div>
<div class="r" style="left:399px;top:272px;width:290px;height:58px;border:1px solid #dadce0;border-radius:6px;box-sizing:border-box;background:#fff;overflow:hidden;"></div>
<div class="t" style="top:290.45px;font-size:20.5px;color:#202124;letter-spacing:-0.039px;left:423.00px;">Standard funnel</div>
<svg class="r" style="left:651.5px;top:297px;width:14.5px;height:8px" viewBox="0 0 14.5 8"><path d="M0 0 H14.5 L7.25 8 Z" fill="#5f6368"/></svg>
<div class="t" style="top:379.80px;font-size:16.3px;color:#5f6368;transform:scaleX(0.8800);transform-origin:left center;letter-spacing:1.801px;left:399.60px;-webkit-text-stroke:0.45px currentColor;">MAKE OPEN FUNNEL</div>
<div class="r" style="left:399.6px;top:398px;width:170.39999999999998px;height:2px;background-image:linear-gradient(to right,#80868b 0 4.5px,transparent 4.5px 7.2px);background-size:7.2px 2px;"></div>
<div class="r" style="left:599px;top:378px;width:44px;height:19.5px;border-radius:10px;background:#90b4f4;"></div>
<div class="r" style="left:623px;top:373px;width:29px;height:29px;border-radius:50%;background:#3a73de;box-shadow:0 1px 2px rgba(0,0,0,0.3);"></div>
<svg class="r" style="left:623px;top:373px;width:29px;height:29px" viewBox="0 0 29 29"><path d="M5.8 16 L10.8 21 L23 8.6" fill="none" stroke="#fff" stroke-width="2.6"/></svg>
<div class="r" style="left:365px;top:421px;width:358px;height:1px;background:#e8eaed;"></div>
<div class="t" style="top:440.40px;font-size:16.3px;color:#5f6368;transform:scaleX(0.8800);transform-origin:left center;letter-spacing:1.751px;left:399.60px;-webkit-text-stroke:0.45px currentColor;">SEGMENT COMPARISONS</div>
<div class="r" style="left:399.6px;top:459px;width:208.89999999999998px;height:2px;background-image:linear-gradient(to right,#80868b 0 4.5px,transparent 4.5px 7.2px);background-size:7.2px 2px;"></div>
<div class="r" style="left:399px;top:473px;width:290px;height:86px;border:1px solid #dadce0;border-radius:6px;box-sizing:border-box;background:#fff;overflow:hidden;"><div style="position:absolute;left:-1px;top:-1px;bottom:-1px;width:6px;background:#3670de"></div></div>
<svg class="r" style="left:425px;top:505px;width:13px;height:20px" viewBox="0 0 13 20"><circle cx="2.30" cy="2.30" r="2.2" fill="#5f6368"/><circle cx="2.30" cy="9.60" r="2.2" fill="#5f6368"/><circle cx="2.30" cy="16.90" r="2.2" fill="#5f6368"/><circle cx="9.60" cy="2.30" r="2.2" fill="#5f6368"/><circle cx="9.60" cy="9.60" r="2.2" fill="#5f6368"/><circle cx="9.60" cy="16.90" r="2.2" fill="#5f6368"/></svg>
<div class="t" style="top:490.29px;font-size:20.8px;color:#3c4043;letter-spacing:0.715px;left:452.30px;-webkit-text-stroke:0.35px currentColor;">Organic</div>
<div class="t" style="top:519.59px;font-size:20.8px;color:#3c4043;letter-spacing:1.439px;left:452.30px;-webkit-text-stroke:0.35px currentColor;">traffic</div>
<svg class="r" style="left:596px;top:505.5px;width:28px;height:20px" viewBox="0 0 28 20"><circle cx="9.7" cy="5" r="3.6" fill="none" stroke="#5f6368" stroke-width="2"/><path d="M1.2 18.5 V16.8 C1.2 13.6 5.5 11.8 9.7 11.8 C13.9 11.8 18.2 13.6 18.2 16.8 V18.5 Z" fill="none" stroke="#5f6368" stroke-width="2" stroke-linejoin="round"/><path d="M16.3 0.6 C19.8 0.2 22.2 2.4 22.2 5.2 C22.2 8 19.8 10.2 16.3 9.8 C17.4 8.5 18 6.9 18 5.2 C18 3.5 17.4 1.9 16.3 0.6 Z" fill="#5f6368"/><path d="M20.3 11.3 C24 12 26.8 13.8 26.8 16.8 V19.5 H22.3 V16.8 C22.3 14.6 21.6 12.7 20.3 11.3 Z" fill="#5f6368"/></svg>
<div class="r" style="left:399px;top:571px;width:290px;height:87px;border:1px dashed #dadce0;border-radius:6px;box-sizing:border-box;background:#fff;overflow:hidden;"></div>
<svg class="r" style="left:417px;top:603.5px;width:19.5px;height:19.5px" viewBox="0 0 19.5 19.5"><path d="M9.75 0 V19.5 M0 9.75 H19.5" stroke="#5f6368" stroke-width="2"/></svg>
<div class="t" style="top:589.05px;font-size:20.5px;color:#5f6368;letter-spacing:0.745px;left:448.00px;-webkit-text-stroke:0.35px currentColor;">Drop or select</div>
<div class="t" style="top:618.25px;font-size:20.5px;color:#5f6368;letter-spacing:0.912px;left:448.00px;-webkit-text-stroke:0.35px currentColor;">segment</div>
<div class="r" style="left:365px;top:675px;width:358px;height:1px;background:#e8eaed;"></div>
<div class="t" style="top:705.70px;font-size:16.3px;color:#5f6368;transform:scaleX(0.8800);transform-origin:left center;letter-spacing:1.612px;left:399.60px;-webkit-text-stroke:0.45px currentColor;">STEPS</div>
<div class="r" style="left:399.6px;top:724.3px;width:52.69999999999999px;height:2px;background-image:linear-gradient(to right,#80868b 0 4.5px,transparent 4.5px 7.2px);background-size:7.2px 2px;"></div>
<svg class="r" style="left:655px;top:702px;width:26px;height:26px" viewBox="0 0 26 26"><path fill-rule="evenodd" fill="#5f6368" d="M1.9 23.4 V18.8 L17.6 3.1 Q19.3 1.4 21 3.1 L22.4 4.5 Q24.1 6.2 22.4 7.9 L6.7 23.4 Z M4.2 20.4 Q4.6 21.8 5.6 21.6 L17.3 9.7 L15.9 8.3 Z"/></svg>
<div class="r" style="left:399px;top:738px;width:290px;height:57px;border:1px solid #dadce0;border-radius:6px;box-sizing:border-box;background:#fff;overflow:hidden;"></div>
<svg class="r" style="left:420.5px;top:756.5px;width:13px;height:20px" viewBox="0 0 13 20"><circle cx="2.30" cy="2.30" r="2.2" fill="#5f6368"/><circle cx="2.30" cy="9.60" r="2.2" fill="#5f6368"/><circle cx="2.30" cy="16.90" r="2.2" fill="#5f6368"/><circle cx="9.60" cy="2.30" r="2.2" fill="#5f6368"/><circle cx="9.60" cy="9.60" r="2.2" fill="#5f6368"/><circle cx="9.60" cy="16.90" r="2.2" fill="#5f6368"/></svg>
<div class="t" style="top:756.25px;font-size:20.5px;color:#3c4043;letter-spacing:0.622px;left:448.00px;-webkit-text-stroke:0.35px currentColor;">Blog visits</div>
<div class="r" style="left:399px;top:808px;width:290px;height:86px;border:1px solid #dadce0;border-radius:6px;box-sizing:border-box;background:#fff;overflow:hidden;"></div>
<svg class="r" style="left:420.5px;top:841.0px;width:13px;height:20px" viewBox="0 0 13 20"><circle cx="2.30" cy="2.30" r="2.2" fill="#5f6368"/><circle cx="2.30" cy="9.60" r="2.2" fill="#5f6368"/><circle cx="2.30" cy="16.90" r="2.2" fill="#5f6368"/><circle cx="9.60" cy="2.30" r="2.2" fill="#5f6368"/><circle cx="9.60" cy="9.60" r="2.2" fill="#5f6368"/><circle cx="9.60" cy="16.90" r="2.2" fill="#5f6368"/></svg>
<div class="t" style="top:825.65px;font-size:20.5px;color:#3c4043;letter-spacing:0.951px;left:448.00px;-webkit-text-stroke:0.35px currentColor;">Click product</div>
<div class="t" style="top:854.85px;font-size:20.5px;color:#3c4043;letter-spacing:0.41px;left:448.00px;-webkit-text-stroke:0.35px currentColor;">pages</div>
<div class="r" style="left:399px;top:906px;width:290px;height:58px;border:1px solid #dadce0;border-radius:6px;box-sizing:border-box;background:#fff;overflow:hidden;"></div>
<svg class="r" style="left:420.5px;top:925.0px;width:13px;height:20px" viewBox="0 0 13 20"><circle cx="2.30" cy="2.30" r="2.2" fill="#5f6368"/><circle cx="2.30" cy="9.60" r="2.2" fill="#5f6368"/><circle cx="2.30" cy="16.90" r="2.2" fill="#5f6368"/><circle cx="9.60" cy="2.30" r="2.2" fill="#5f6368"/><circle cx="9.60" cy="9.60" r="2.2" fill="#5f6368"/><circle cx="9.60" cy="16.90" r="2.2" fill="#5f6368"/></svg>
<div class="t" style="top:924.75px;font-size:20.5px;color:#3c4043;letter-spacing:0.17px;left:448.00px;-webkit-text-stroke:0.35px currentColor;">Purchase</div>
<div class="r" style="left:365px;top:982px;width:358px;height:1px;background:#e8eaed;"></div>
<div class="t" style="top:1000.10px;font-size:16.3px;color:#5f6368;transform:scaleX(0.8800);transform-origin:left center;letter-spacing:1.616px;left:399.80px;-webkit-text-stroke:0.45px currentColor;">BREAKDOWN</div>
<div class="r" style="left:399.8px;top:1019px;width:105.39999999999998px;height:2px;background-image:linear-gradient(to right,#80868b 0 4.5px,transparent 4.5px 7.2px);background-size:7.2px 2px;"></div>
<div class="r" style="left:399px;top:1033px;width:290px;height:57px;border:1px solid #dadce0;border-radius:6px;box-sizing:border-box;background:#fff;overflow:hidden;"><div style="position:absolute;left:-1px;top:-1px;bottom:-1px;width:6px;background:#80bd7a"></div></div>
<svg class="r" style="left:420.5px;top:1051.5px;width:13px;height:20px" viewBox="0 0 13 20"><circle cx="2.30" cy="2.30" r="2.2" fill="#5f6368"/><circle cx="2.30" cy="9.60" r="2.2" fill="#5f6368"/><circle cx="2.30" cy="16.90" r="2.2" fill="#5f6368"/><circle cx="9.60" cy="2.30" r="2.2" fill="#5f6368"/><circle cx="9.60" cy="9.60" r="2.2" fill="#5f6368"/><circle cx="9.60" cy="16.90" r="2.2" fill="#5f6368"/></svg>
<div class="r" style="left:365px;top:1049px;width:380px;height:3px;background:rgba(0,0,0,0.498);"></div>
</div></body></html>
